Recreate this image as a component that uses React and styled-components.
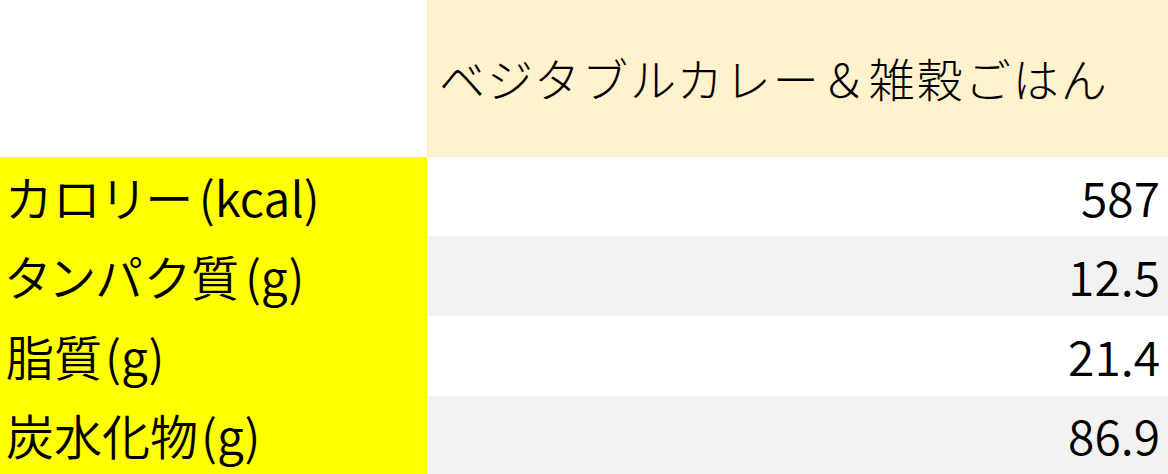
import React from "react";
import styled, { createGlobalStyle } from "styled-components";

const GlobalStyle = createGlobalStyle`
    html, body {
        margin: 0;
        padding: 0;
        background: #ffffff;
    }
    body {
        font-family: "Noto Sans CJK JP", "Noto Sans", sans-serif;
        color: #000000;
    }
`;

const Table = styled.div`
    display: grid;
    grid-template-columns: 427px 1fr;
    grid-template-rows: 157px 79px 80px 80px 78px;
    width: 1168px;
    height: 474px;
`;

const Corner = styled.div`
    background: #ffffff;
`;

const HeadCell = styled.div`
    background: #fff2cc;
    display: flex;
    align-items: center;
    padding-left: 12px;
    font-size: 46px;
    font-weight: 300;
    letter-spacing: 2px;
    white-space: nowrap;
    padding-bottom: 4px;
`;

const Label = styled.div`
    background: #ffff00;
    display: flex;
    align-items: center;
    padding-left: 6px;
    font-size: 48px;
    font-weight: 350;
    white-space: nowrap;
    padding-bottom: 2px;
`;

const Name = styled.span`
    font-feature-settings: "palt";
    letter-spacing: ${p => (p.$kana ? "3px" : "0")};
`;

const Unit = styled.span`
    margin-left: 3px;
`;

const Value = styled.div`
    background: ${p => (p.$shade ? "#f2f2f2" : "#ffffff")};
    display: flex;
    align-items: center;
    justify-content: flex-end;
    padding-right: 8px;
    font-size: 48px;
    font-weight: 350;
    padding-bottom: 2px;
`;

const rows = [
    { name: "カロリー", unit: "(kcal)", value: "587", kana: true },
    { name: "タンパク質", unit: "(g)", value: "12.5", kana: true },
    { name: "脂質", unit: "(g)", value: "21.4" },
    { name: "炭水化物", unit: "(g)", value: "86.9" },
];

export default function App() {
    return (
        <>
            <GlobalStyle />
            <Table>
                <Corner />
                <HeadCell>ベジタブルカレー＆雑穀ごはん</HeadCell>
                {rows.map((r, i) => (
                    <React.Fragment key={r.name}>
                        <Label>
                            <Name $kana={r.kana}>{r.name}</Name>
                            <Unit>{r.unit}</Unit>
                        </Label>
                        <Value $shade={i % 2 === 1}>{r.value}</Value>
                    </React.Fragment>
                ))}
            </Table>
        </>
    );
}
